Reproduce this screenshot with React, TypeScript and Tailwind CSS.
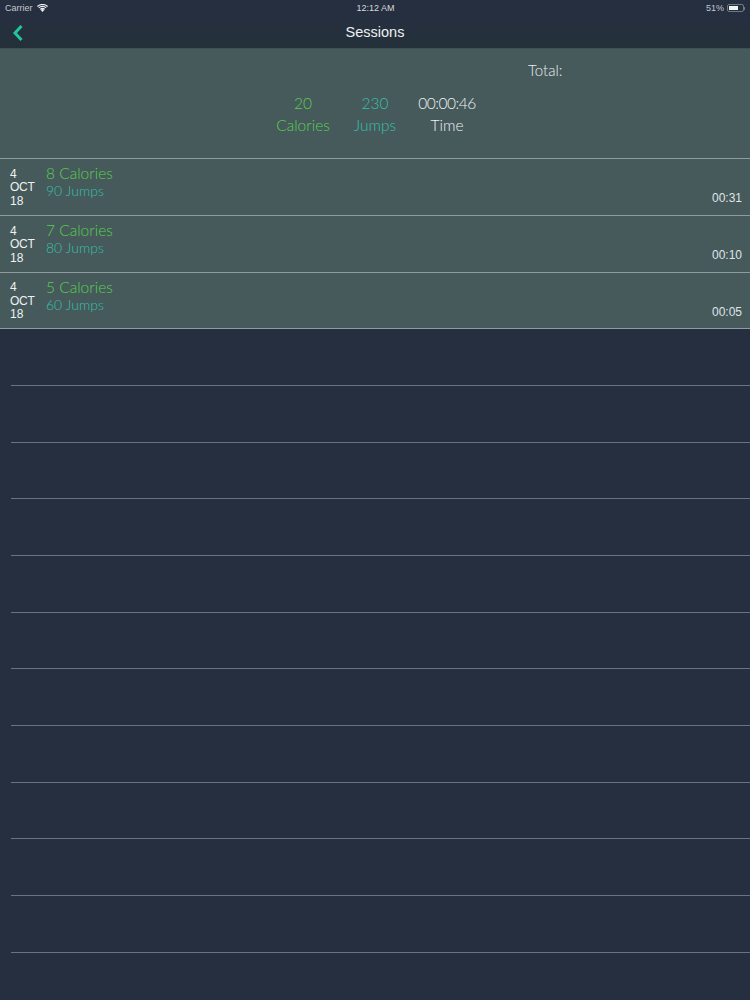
import React from 'react';

/* ---------------- data ---------------- */
interface Session {
  calories: string;
  jumps: string;
  time: string;
}

const sessions: Session[] = [
  { calories: '8 Calories', jumps: '90 Jumps', time: '00:31' },
  { calories: '7 Calories', jumps: '80 Jumps', time: '00:10' },
  { calories: '5 Calories', jumps: '60 Jumps', time: '00:05' },
];

const emptyRows = Array.from({ length: 11 });

/* ---------------- status bar ---------------- */
const StatusBar: React.FC = () => (
  <div className="flex h-[16px] items-center justify-between pl-[5px] pr-[5px] text-[9px] leading-none text-[#c3c8cf]">
    <div className="flex w-[120px] items-center gap-[4px]">
      <span>Carrier</span>
      <svg width="11" height="8" viewBox="0 0 11 8" fill="#f0f2f4">
        <path d="M5.5 8 3.7 6a2.5 2.5 0 0 1 3.6 0L5.5 8Z" />
        <path d="M2.8 5a4 4 0 0 1 5.4 0l-.7.8a3 3 0 0 0-4 0L2.8 5Z" />
        <path d="M1.4 3.5a5.9 5.9 0 0 1 8.2 0l-.7.8a4.9 4.9 0 0 0-6.8 0l-.7-.8Z" />
        <path d="M0 2.1a7.9 7.9 0 0 1 11 0l-.7.8a6.9 6.9 0 0 0-9.6 0L0 2.1Z" />
      </svg>
    </div>
    <span className="pl-[1px] text-[#d5d8dc]">12:12 AM</span>
    <div className="flex w-[120px] items-center justify-end gap-[3px]">
      <span>51%</span>
      <div className="flex items-center">
        <div className="h-[8px] w-[17px] rounded-[2px] border border-[#6f7784] p-[1px]">
          <div className="h-full w-[9px] bg-[#f2f3f4]" />
        </div>
        <div className="h-[3px] w-[1px] bg-[#6f7784]" />
      </div>
    </div>
  </div>
);

/* ---------------- nav bar ---------------- */
const NavBar: React.FC = () => (
  <div className="relative flex h-[32px] items-center justify-center bg-gradient-to-b from-[#262f40] to-[#233039] pt-[2px]">
    <svg className="absolute left-[12px] top-[8px]" width="12" height="18" viewBox="0 0 12 18" fill="none">
      <path d="M9.5 2 3 9l6.5 7" stroke="#22c3a0" strokeWidth="3" />
    </svg>
    <span className="text-[14.5px] text-[#eef0f2]">Sessions</span>
  </div>
);

/* ---------------- summary ---------------- */
const Total: React.FC = () => (
  <div className="h-[110.4px] border-t border-[#3d5052] bg-[#465a5c] font-['Lato',sans-serif] font-light">
    <div className="pl-[528px] pt-[11px] text-[15px] leading-[20px] text-[#e8eded]">Total:</div>
    <div className="flex justify-center pt-[12px] text-center text-[15.5px] leading-[22px]">
      <div className="w-[72px] text-[#58d04e]">
        <div>20</div>
        <div>Calories</div>
      </div>
      <div className="w-[72px] text-[#34c0a6]">
        <div>230</div>
        <div>Jumps</div>
      </div>
      <div className="w-[72px] text-[#eef2f2]">
        <div className="tracking-[-0.5px]">00:00:46</div>
        <div>Time</div>
      </div>
    </div>
  </div>
);

/* ---------------- session row ---------------- */
const SessionRow: React.FC<{ session: Session }> = ({ session }) => (
  <div className="flex h-[56.7px] border-t border-[#8f9b9e] bg-[#465a5c] pl-[10px] pr-[8px]">
    <div className="w-[36px] pt-[8.5px] font-['Liberation_Sans',sans-serif] text-[12px] leading-[13.5px] text-[#eef1f1]">
      <div>4</div>
      <div className="tracking-[-0.3px]">OCT</div>
      <div>18</div>
    </div>
    <div className="flex-1 pt-[4px] font-['Lato',sans-serif] font-light">
      <div className="text-[15.5px] leading-[20px] text-[#58d04e]">{session.calories}</div>
      <div className="text-[14px] leading-[15.5px] text-[#34c0a6]">{session.jumps}</div>
    </div>
    <div className="self-end pb-[9.6px] font-['Liberation_Sans',sans-serif] text-[12px] leading-[14px] text-[#dfe5e5]">
      {session.time}
    </div>
  </div>
);

/* ---------------- page ---------------- */
export default function App() {
  return (
    <div className="h-[1000px] w-[750px] overflow-hidden bg-[#262f40] font-['Liberation_Sans',sans-serif]">
      <StatusBar />
      <NavBar />
      <Total />
      {sessions.map((s, i) => (
        <SessionRow key={i} session={s} />
      ))}
      <div className="h-[1px] bg-[#8f9b9e]" />
      {emptyRows.map((_, i) => (
        <div key={i} className="h-[56.7px] pl-[11px]">
          <div className="relative top-[55.5px] h-[1px] bg-[#6a7380]" />
        </div>
      ))}
    </div>
  );
}
